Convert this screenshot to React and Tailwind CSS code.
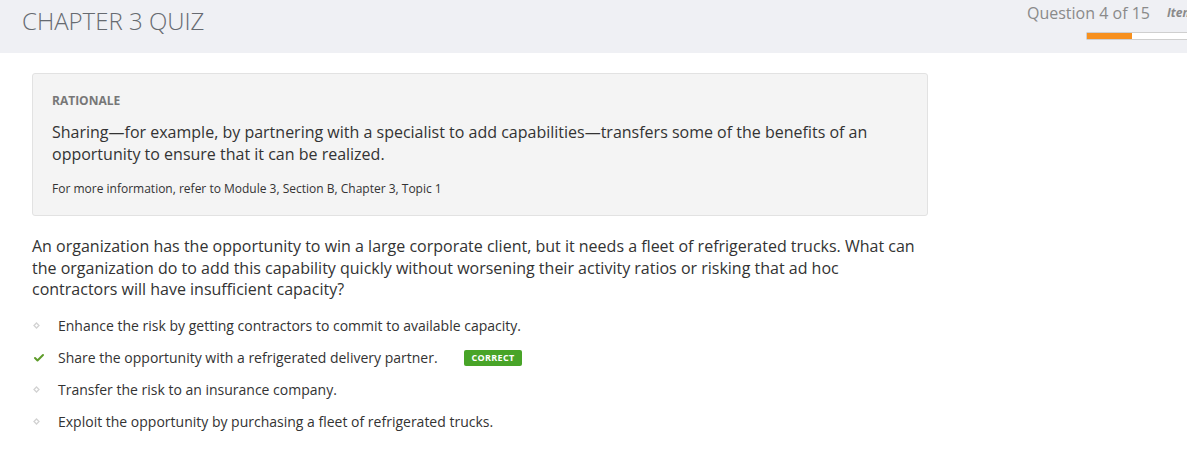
import { Check } from 'lucide-react';

const options = [
  { text: 'Enhance the risk by getting contractors to commit to available capacity.', correct: false },
  { text: 'Share the opportunity with a refrigerated delivery partner.', correct: true },
  { text: 'Transfer the risk to an insurance company.', correct: false },
  { text: 'Exploit the opportunity by purchasing a fleet of refrigerated trucks.', correct: false },
];

const Diamond = () => (
  <svg width="7" height="7" viewBox="0 0 7 7" className="text-[#d2d2d2]">
    <path d="M3.5 1 L6 3.5 L3.5 6 L1 3.5 Z" fill="none" stroke="currentColor" strokeWidth="1.3" />
  </svg>
);

const App = () => {
  return (
    <div className="w-[1187px] h-[450px] overflow-hidden bg-white font-['Open_Sans',sans-serif]">
      <div className="h-[53px] bg-[#eff0f4] flex">
        <h1 className="w-[1027px] shrink-0 pl-[22px] pt-[4px] text-[24px] font-light text-[#666a70] leading-[34px]">CHAPTER 3 QUIZ</h1>
        <div className="shrink-0 flex flex-col">
          <div className="flex items-start whitespace-nowrap">
            <span className="text-[16px] text-[#8a8a8a] leading-[22px] pt-[2px]">Question 4 of 15</span>
            <span className="ml-[17px] pt-[6px] text-[12px] font-bold italic text-[#8a8a8a] leading-[14px]">Item</span>
          </div>
          <div className="ml-[59px] mt-[8px] w-[130px] h-[8px] bg-white border border-[#cfcfcf] rounded-[1px]">
            <div className="h-full w-[45px] bg-[#f7901e]" />
          </div>
        </div>
      </div>

      <div className="w-[896px] ml-[32px] mt-[20px] bg-[#f4f4f4] border border-[#e2e2e2] rounded-[3px] px-[19px] pt-[19px] pb-[18px]">
        <div className="text-[12px] font-bold text-[#777] leading-[16px]">RATIONALE</div>
        <p className="mt-[12px] text-[16px] text-[#333] leading-[22px]">
          Sharing—for example, by partnering with a specialist to add capabilities—transfers some of the benefits of an opportunity to ensure that it can be realized.
        </p>
        <p className="mt-[16px] text-[12px] text-[#333] leading-[16px]">
          For more information, refer to Module 3, Section B, Chapter 3, Topic 1
        </p>
      </div>

      <p className="w-[896px] ml-[32px] mt-[20px] text-[16px] text-[#333] leading-[21.5px]">
        An organization has the opportunity to win a large corporate client, but it needs a fleet of refrigerated trucks. What can the organization do to add this capability quickly without worsening their activity ratios or risking that ad hoc contractors will have insufficient capacity?
      </p>

      <ul className="ml-[32px] mt-[15px] flex flex-col gap-[12px]">
        {options.map((opt, i) => (
          <li key={i} className="flex items-center h-[20px]">
            <span className="w-[26px] flex items-center justify-start">
              {opt.correct ? (
                <Check size={12} strokeWidth={4} className="text-[#5e9c2a] ml-[1px]" />
              ) : (
                <span className="ml-[1px] flex"><Diamond /></span>
              )}
            </span>
            <span className="text-[14px] text-[#333] leading-[20px]">{opt.text}</span>
            {opt.correct && (
              <span className="ml-[26px] bg-[#48a428] text-white text-[9px] font-bold tracking-[0.3px] leading-[16px] h-[16px] px-[8px] rounded-[2px]">
                CORRECT
              </span>
            )}
          </li>
        ))}
      </ul>
    </div>
  );
};

export default App;
